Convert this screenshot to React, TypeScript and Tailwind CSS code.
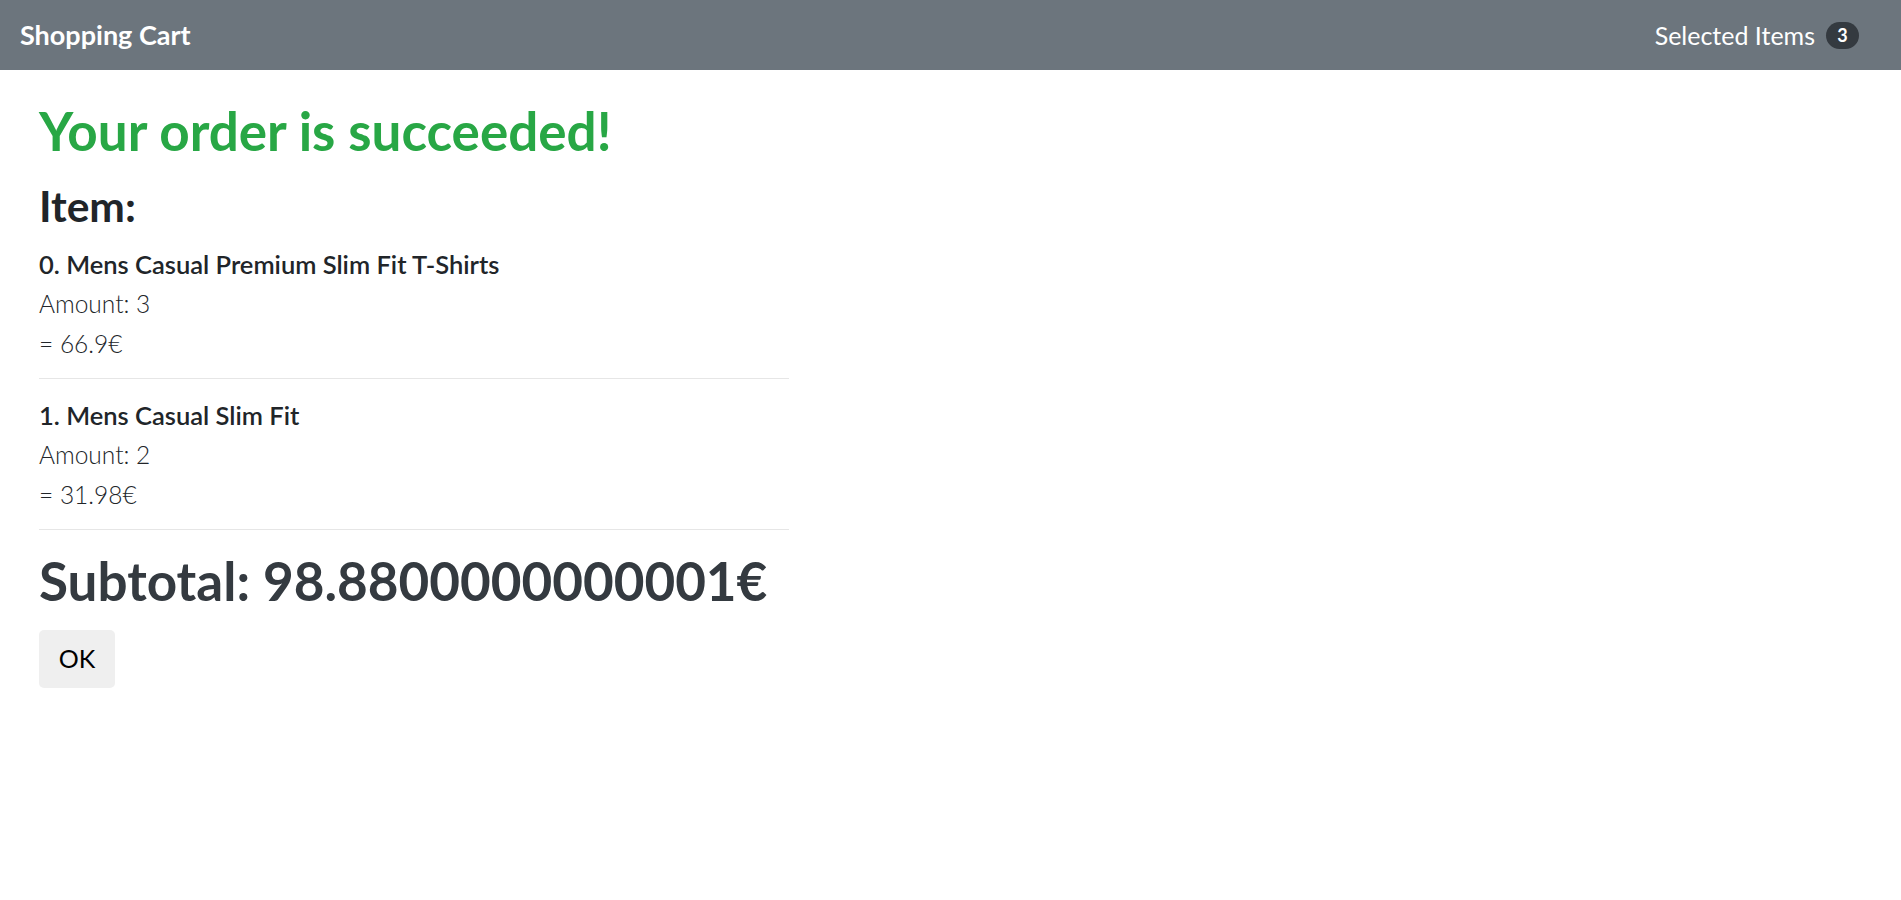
import React from 'react';

interface OrderItem {
  title: string;
  amount: number;
  total: number;
}

const items: OrderItem[] = [
  { title: 'Mens Casual Premium Slim Fit T-Shirts', amount: 3, total: 66.9 },
  { title: 'Mens Casual Slim Fit', amount: 2, total: 31.98 },
];

const fontClass = "font-['Lato','Noto_Sans',sans-serif]";

function Navbar({ count }: { count: number }) {
  return (
    <nav className="flex h-[70px] items-center justify-between bg-[#6c757d] pl-[20px] pr-[42px]">
      <span className="text-[27px] font-bold leading-[30px] text-white">Shopping Cart</span>
      <div className="flex items-center gap-[11px]">
        <span className="text-[25px] leading-[30px] text-white">Selected Items</span>
        <span className="flex h-[27px] w-[33px] items-center justify-center rounded-full bg-[#343a40] text-[18px] font-bold text-white">
          {count}
        </span>
      </div>
    </nav>
  );
}

function ItemRow({ item, index }: { item: OrderItem; index: number }) {
  return (
    <div>
      <h5 className="text-[25.5px] font-semibold leading-[30px] text-[#212529]">
        {index}. {item.title}
      </h5>
      <p className="mt-[5px] text-[24.5px] font-light leading-[40px] text-[#212529]">Amount: {item.amount}</p>
      <p className="text-[24.5px] font-light leading-[40px] text-[#212529]">= {item.total}€</p>
      <hr className="mb-[21px] mt-[14px] border-t border-[#e6e6e6]" />
    </div>
  );
}

export default function App() {
  return (
    <div className={`min-h-[900px] bg-white ${fontClass}`}>
      <Navbar count={3} />
      <main className="w-[789px] pl-[39px]">
        <h1 className="mt-[31px] text-[53px] font-bold leading-[60px] text-[#28a745]">Your order is succeeded!</h1>
        <h2 className="mt-[21px] text-[42.5px] font-bold leading-[48px] text-[#212529]">Item:</h2>
        <div className="mt-[19px]">
          {items.map((item, index) => (
            <ItemRow key={item.title} item={item} index={index} />
          ))}
        </div>
        <h1 className="mt-[4px] text-[53px] font-bold leading-[60px] text-[#343a40]">Subtotal: 98.8800000000001€</h1>
        <button className="mt-[19px] flex h-[58px] w-[76px] items-center justify-center rounded-[5px] bg-[#efefef] text-[25px] text-black">
          OK
        </button>
      </main>
    </div>
  );
}
